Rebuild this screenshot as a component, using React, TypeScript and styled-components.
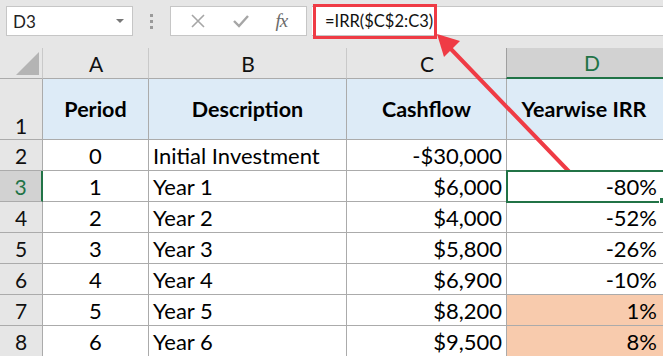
import styled, { createGlobalStyle } from "styled-components"

const GlobalStyle = createGlobalStyle`
  html, body {
    margin: 0;
    padding: 0;
    background: #e6e6e6;
    overflow: hidden;
  }
  body {
    font-family: Lato, "Liberation Sans", sans-serif;
  }
`

const Page = styled.div`
  position: relative;
  width: 663px;
  height: 356px;
  overflow: hidden;
  background: #e6e6e6;
`

const FormulaBar = styled.div`
  display: flex;
  align-items: flex-start;
  height: 48px;
  padding: 6px 0 0 6px;
  box-sizing: border-box;
`

const NameBox = styled.div`
  display: flex;
  align-items: center;
  justify-content: space-between;
  width: 127px;
  height: 30px;
  box-sizing: border-box;
  background: #fff;
  border: 1px solid #c6c6c6;
  padding: 0 8px 0 6px;
  font-size: 17px;
  color: #222;
`

const Caret = styled.span`
  width: 0;
  height: 0;
  border-left: 4px solid transparent;
  border-right: 4px solid transparent;
  border-top: 4px solid #777;
`

const Dots = styled.div`
  display: flex;
  flex-direction: column;
  gap: 3px;
  width: 37px;
  align-items: center;
  padding-top: 8px;

  span {
    width: 3px;
    height: 3px;
    background: #9a9a9a;
  }
`

const IconBox = styled.div`
  display: flex;
  align-items: center;
  justify-content: space-around;
  width: 137px;
  height: 30px;
  box-sizing: border-box;
  background: #fff;
  border: 1px solid #c6c6c6;
  padding: 0 6px;
`

const Fx = styled.span`
  font-family: "Liberation Serif", serif;
  font-style: italic;
  font-size: 19px;
  color: #6b6b6b;
  letter-spacing: -1px;
`

const FormulaInput = styled.div`
  flex: 1;
  height: 30px;
  margin-left: 5px;
  box-sizing: border-box;
  background: #fff;
  border-top: 1px solid #c6c6c6;
  border-bottom: 1px solid #c6c6c6;
  display: flex;
  align-items: center;
  padding-left: 13px;
  font-size: 16.5px;
  color: #111;
`

const Sheet = styled.div`
  display: grid;
  grid-template-columns: 43px 106px 198px 160px 170px;
  grid-template-rows: 31px 61px repeat(7, 31px);
`

const ColHead = styled.div<{ $active?: boolean }>`
  display: flex;
  align-items: center;
  justify-content: center;
  box-sizing: border-box;
  font-size: 21px;
  background: ${(p) => (p.$active ? "#d2d2d2" : "#e6e6e6")};
  color: ${(p) => (p.$active ? "#217346" : "#111")};
  border-left: 1px solid ${(p) => (p.$active ? "#9f9f9f" : "#c9c9c9")};
  border-bottom: ${(p) => (p.$active ? "2px solid #217346" : "1px solid #ababab")};
  margin-left: -1px;
`

const Corner = styled.div`
  position: relative;
  box-sizing: border-box;
  border-bottom: 1px solid #ababab;
  border-right: 1px solid #c9c9c9;

  &::after {
    content: "";
    position: absolute;
    right: 3px;
    bottom: 3px;
    width: 0;
    height: 0;
    border-left: 23px solid transparent;
    border-bottom: 23px solid #b4b4b4;
  }
`

const RowHead = styled.div<{ $active?: boolean; $tall?: boolean }>`
  display: flex;
  align-items: ${(p) => (p.$tall ? "flex-end" : "center")};
  justify-content: center;
  box-sizing: border-box;
  font-size: 21px;
  padding-bottom: ${(p) => (p.$tall ? "1px" : "0")};
  background: ${(p) => (p.$active ? "#d2d2d2" : "#e6e6e6")};
  color: ${(p) => (p.$active ? "#217346" : "#111")};
  border-bottom: 1px solid #ababab;
  border-right: ${(p) => (p.$active ? "2px solid #217346" : "1px solid #ababab")};
`

// last column runs past the window edge, so $last pulls its content back in
const Cell = styled.div<{
  $align?: "left" | "center" | "right"
  $fill?: string
  $head?: boolean
  $last?: boolean
  $selected?: boolean
}>`
  position: relative;
  display: flex;
  align-items: center;
  justify-content: ${(p) =>
    p.$align === "left" ? "flex-start" : p.$align === "right" ? "flex-end" : "center"};
  box-sizing: border-box;
  padding: 0 ${(p) => (p.$last ? "19px" : "4px")} 0 4px;
  font-size: ${(p) => (p.$head ? "21.5px" : "22px")};
  font-weight: ${(p) => (p.$head ? 700 : 400)};
  color: #000;
  white-space: nowrap;
  background: ${(p) => p.$fill || (p.$head ? "#ddebf7" : "#fff")};
  border-right: 1px solid #ababab;
  border-bottom: 1px solid #ababab;
  ${(p) =>
    p.$selected &&
    `
    outline: 2px solid #217346;
    outline-offset: -1px;
    z-index: 1;
    &::after {
      content: "";
      position: absolute;
      left: 152px;
      bottom: -3px;
      width: 5px;
      height: 5px;
      background: #217346;
      border: 1px solid #fff;
    }
  `}
`

const Highlight = styled.div`
  position: absolute;
  left: 313px;
  top: 4px;
  width: 124px;
  height: 35px;
  box-sizing: border-box;
  border: 3px solid #ef3b45;
`

const Arrow = styled.svg`
  position: absolute;
  left: 0;
  top: 0;
  pointer-events: none;
`

const headers = ["Period", "Description", "Cashflow", "Yearwise IRR"]

const rows = [
  { period: "0", desc: "Initial Investment", cash: "-$30,000", irr: "" },
  { period: "1", desc: "Year 1", cash: "$6,000", irr: "-80%" },
  { period: "2", desc: "Year 2", cash: "$4,000", irr: "-52%" },
  { period: "3", desc: "Year 3", cash: "$5,800", irr: "-26%" },
  { period: "4", desc: "Year 4", cash: "$6,900", irr: "-10%" },
  { period: "5", desc: "Year 5", cash: "$8,200", irr: "1%" },
  { period: "6", desc: "Year 6", cash: "$9,500", irr: "8%" },
]

const App: React.FC = () => {
  return (
    <Page>
      <GlobalStyle />
      <FormulaBar>
        <NameBox>
          D3
          <Caret />
        </NameBox>
        <Dots>
          <span />
          <span />
          <span />
        </Dots>
        <IconBox>
          <svg width="16" height="16" viewBox="0 0 16 16">
            <path d="M2 2 L14 14 M14 2 L2 14" stroke="#a6a6a6" strokeWidth="1.6" fill="none" />
          </svg>
          <svg width="18" height="16" viewBox="0 0 18 16">
            <path d="M2 8 L7 13 L16 3" stroke="#a6a6a6" strokeWidth="2.4" fill="none" />
          </svg>
          <Fx>fx</Fx>
        </IconBox>
        <FormulaInput>=IRR($C$2:C3)</FormulaInput>
      </FormulaBar>

      <Sheet>
        <Corner />
        <ColHead>A</ColHead>
        <ColHead>B</ColHead>
        <ColHead>C</ColHead>
        <ColHead $active>D</ColHead>

        <RowHead $tall>1</RowHead>
        {headers.map((h, i) => (
          <Cell key={h} $head $last={i === 3}>
            {h}
          </Cell>
        ))}

        {rows.map((r, i) => {
          const n = i + 2
          const peach = n >= 7 ? "#f8cbad" : undefined
          return [
            <RowHead key={`h${n}`} $active={n === 3}>
              {n}
            </RowHead>,
            <Cell key={`a${n}`}>{r.period}</Cell>,
            <Cell key={`b${n}`} $align="left">
              {r.desc}
            </Cell>,
            <Cell key={`c${n}`} $align="right">
              {r.cash}
            </Cell>,
            <Cell key={`d${n}`} $align="right" $last $fill={peach} $selected={n === 3}>
              {r.irr}
            </Cell>,
          ]
        })}
      </Sheet>

      <Highlight />
      <Arrow width="663" height="356" viewBox="0 0 663 356">
        <line x1="581" y1="184" x2="449" y2="47" stroke="#ef3b45" strokeWidth="4" strokeLinecap="round" />
        <polygon points="437,34 460,41 444,57" fill="#ef3b45" />
      </Arrow>
    </Page>
  )
}

export default App
